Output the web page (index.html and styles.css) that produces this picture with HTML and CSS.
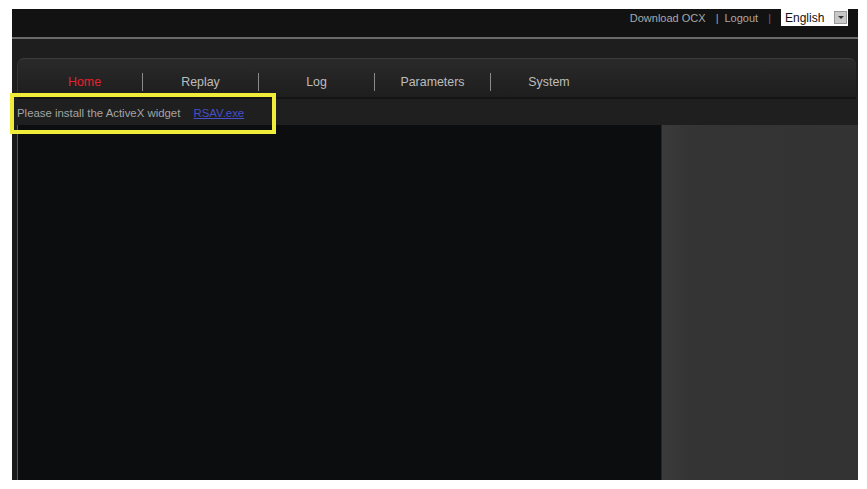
FILE: index.html
```html
<!DOCTYPE html>
<html lang="en">
<head>
    <meta charset="UTF-8">
    <title>Home</title>
    <link rel="stylesheet" href="styles.css">
</head>
<body>
    <div class="frame">
        <div class="topbar">
            <a class="top-link" href="#">Download OCX</a>
            <span class="top-sep">|</span>
            <a class="top-link" href="#">Logout</a>
            <span class="top-sep blue">|</span>
            <div class="lang">
                <span class="lang-text">English</span>
                <span class="lang-btn"><span class="arrow"></span></span>
            </div>
        </div>
        <div class="rule"></div>
        <div class="nav-wrap">
            <div class="nav">
                <a class="nav-item active" href="#">Home</a>
                <a class="nav-item" href="#">Replay</a>
                <a class="nav-item" href="#">Log</a>
                <a class="nav-item" href="#">Parameters</a>
                <a class="nav-item" href="#">System</a>
            </div>
        </div>
        <div class="notice">
            Please install the ActiveX widget
            <a class="notice-link" href="#">RSAV.exe</a>
        </div>
        <div class="main">
            <div class="video"></div>
            <div class="side"></div>
        </div>
    </div>
    <div class="highlight"></div>
</body>
</html>
```

FILE: styles.css
```css
* {
    margin: 0;
    padding: 0;
    box-sizing: border-box;
}

body {
    font-family: "Liberation Sans", Arial, sans-serif;
    background-color: #fff;
    width: 867px;
    height: 489px;
    overflow: hidden;
    position: relative;
}

.frame {
    margin: 9px 0 0 12px;
    width: 846px;
    height: 471px;
    background-color: #1e1e1e;
    display: flex;
    flex-direction: column;
}

.topbar {
    height: 28px;
    background-color: #121212;
    display: flex;
    justify-content: flex-end;
    align-items: flex-start;
    padding-right: 10px;
    font-size: 11px;
    color: #a8a8a8;
}

.top-link {
    color: #a8a8a8;
    text-decoration: none;
    margin-top: 3px;
}

.top-sep {
    margin: 3px 6px 0 10px;
}

.top-sep.blue {
    color: #6a5fb0;
    margin: 3px 10px 0 10px;
}

.lang {
    width: 67px;
    height: 17px;
    background-color: #fff;
    display: flex;
    align-items: center;
    justify-content: space-between;
    padding: 0 1px 0 4px;
}

.lang-text {
    color: #111;
    font-size: 12px;
}

.lang-btn {
    width: 13px;
    height: 13px;
    background-color: #c8c8c8;
    border: 1px solid #999;
    display: flex;
    align-items: center;
    justify-content: center;
}

.arrow {
    border-left: 3px solid transparent;
    border-right: 3px solid transparent;
    border-top: 3px solid #333;
}

.rule {
    height: 2px;
    background-color: #6a6a6a;
}

.nav-wrap {
    padding: 19px 2px 0 5px;
}

.nav {
    height: 41px;
    display: flex;
    align-items: center;
    padding: 7px 0 0 9px;
    background: linear-gradient(#2a2a2a, #232323 55%, #1e1e1e);
    border-top: 1px solid #3c3c3c;
    border-left: 1px solid #333;
    border-bottom: 2px solid #141414;
    border-radius: 7px 7px 0 0;
}

.nav-item {
    width: 116px;
    text-align: center;
    font-size: 12.4px;
    color: #bdbdbd;
    text-decoration: none;
    border-right: 1px solid #8a8a8a;
    line-height: 18px;
}

.nav-item:last-child {
    border-right: none;
}

.nav-item.active {
    color: #e8202a;
}

.notice {
    height: 26px;
    background-color: #1f1f1f;
    padding: 8px 0 0 5px;
    font-size: 11.4px;
    color: #a4a4a4;
}

.notice-link {
    color: #4650c8;
    margin-left: 10px;
}

.main {
    flex: 1;
    display: flex;
    padding-left: 5px;
    background-color: #1a1a1a;
}

.video {
    width: 644px;
    background-color: #0c0d0f;
    border-left: 1px solid #555;
}

.side {
    flex: 1;
    background: linear-gradient(to right, #3a3b3a, #343434 30px, #333);
    border-left: 1px solid #262626;
}

.highlight {
    position: absolute;
    left: 10px;
    top: 93px;
    width: 266px;
    height: 41px;
    border: 4px solid #f0ec3a;
}
```
